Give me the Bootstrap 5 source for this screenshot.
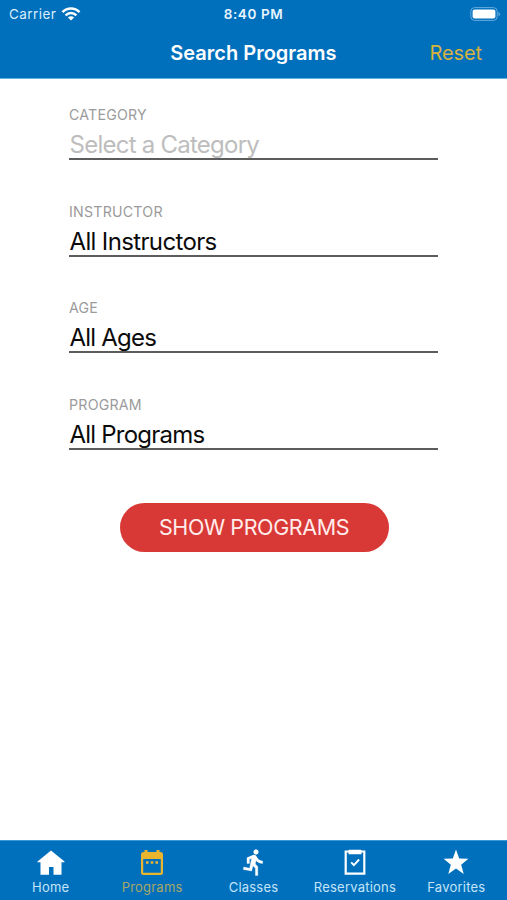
<!DOCTYPE html>
<html lang="en">
<head>
<meta charset="utf-8">
<meta name="viewport" content="width=device-width, initial-scale=1">
<title>Search Programs</title>
<link href="https://cdn.jsdelivr.net/npm/bootstrap@5.3.0/dist/css/bootstrap.min.css" rel="stylesheet">
<style>
body { font-family: Inter, "Liberation Sans", sans-serif; height: 900px; }
.bar-blue { background: #0070bd; color: #fff; }
.top-bar { height: 79px; border-bottom: 1px solid #5fb4e6; }
.status-row { height: 27px; font-size: 13.5px; line-height: 28px; }
.status-row > *, .title-row > * { width: 33.3333%; }
.carrier { letter-spacing: .42px; color: #d9eefb; padding-left: 9px; }
.carrier svg { margin-left: 5px; }
.clock { font-weight: 600; font-size: 13.5px; letter-spacing: .6px; color: #e8f5fd; }
.batt { padding-right: 6px; }
.title-row { height: 51px; line-height: 52px; font-size: 20px; }
.title-text { font-weight: 600; letter-spacing: 0; }
.reset-link { color: #d8b23c; letter-spacing: -.1px; padding-right: 25px; }
.search-form { width: 369px; margin-left: 69px; padding-top: 28px; }
.field { height: 96.5px; }
.field-label { font-size: 14.2px; line-height: 16px; color: #9b9b9b; letter-spacing: .22px; }
.field-value { height: 37px; font-size: 24px; line-height: 43px; letter-spacing: -.64px; color: #0b0b0b; border-bottom: 2px solid #5c5c5c; padding-left: .5px; white-space: nowrap; }
.field-value.short-value { letter-spacing: -.78px; }
.placeholder-value { color: #bdbdbd; letter-spacing: -.75px; }
.show-btn { width: 269px; height: 49px; margin: 10px 0 0 50.5px; background: #d93936; color: #ffeceb; font-size: 21.5px; letter-spacing: -.4px; line-height: 49px; }
.show-btn:hover { background: #c5302d; color: #fff; }
.tab-bar { height: 60px; border-top: 1px solid #3a9ad8; }
.tab { flex: 1 1 0; color: #c5e4f7; font-size: 13px; line-height: 16px; letter-spacing: .22px; padding-top: 8px; }
.tab svg { display: block; margin-bottom: 3px; color: #fff; }
.tab.current { color: #a9a765; }
.tab.current svg { color: #e9b52e; }
</style>
</head>
<body class="d-flex flex-column bg-white overflow-hidden">
<header class="top-bar bar-blue flex-shrink-0">
  <div class="status-row d-flex">
    <div class="carrier d-flex align-items-center"><span>Carrier</span>
      <svg width="20" height="16" viewBox="0 0 20 16" fill="none" stroke="#fff" stroke-width="2.5"><path d="M1.5 6.1C6.3 1.2 13.7 1.2 18.500 6.100M4.600 9.300C7.700 6.300 12.300 6.300 15.400 9.300"/><path d="M10 14.500 6.900 11.400C8.600 9.800 11.400 9.800 13.100 11.400Z" fill="#fff" stroke="none"/></svg>
    </div>
    <div class="clock text-center">8:40 PM</div>
    <div class="batt d-flex align-items-center justify-content-end">
      <svg width="31" height="14" viewBox="0 0 31 14"><rect x=".8" y=".6" width="26.400" height="12.800" rx="3.800" fill="none" stroke="#66abdc"/><rect x="2.600" y="2.400" width="22.800" height="9.200" rx="2" fill="#fff"/><path d="M28.500 4.700q3.200 2.300 0 4.600z" fill="#66abdc"/></svg>
    </div>
  </div>
  <div class="title-row d-flex text-nowrap">
    <div></div>
    <div class="title-text text-center">Search Programs</div>
    <div class="reset-link text-end">Reset</div>
  </div>
</header>
<main class="flex-grow-1">
  <div class="search-form">
    <div class="field"><div class="field-label">CATEGORY</div><div class="field-value placeholder-value">Select a Category</div></div>
    <div class="field"><div class="field-label">INSTRUCTOR</div><div class="field-value">All Instructors</div></div>
    <div class="field"><div class="field-label">AGE</div><div class="field-value short-value">All Ages</div></div>
    <div class="field"><div class="field-label">PROGRAM</div><div class="field-value short-value">All Programs</div></div>
    <button type="button" class="show-btn btn rounded-pill border-0 p-0 d-block">SHOW PROGRAMS</button>
  </div>
</main>
<nav class="tab-bar bar-blue d-flex flex-shrink-0">
  <div class="tab d-flex flex-column align-items-center">
    <svg width="28" height="27" viewBox="0 0 28 27" fill="currentColor"><path d="M14 1.500 27.500 12.500V13.200H24.500V25.700H16.500V18H12V25.700H3.500V13.200H.5V12.500Z"/></svg>
    <span>Home</span>
  </div>
  <div class="tab current d-flex flex-column align-items-center">
    <svg width="24" height="27" viewBox="0 0 24 27" fill="currentColor"><path fill-rule="evenodd" d="M3.500 3H4.500V1H7.500V3H16.500V1H19.500V3H20.500Q23 3 23 5.500V23.500Q23 26 20.500 26H3.500Q1 26 1 23.500V5.500Q1 3 3.500 3ZM3.200 10V23.800H20.800V10Z"/><path d="M6 12.200h2.600v2.600H6zM10.700 12.200h2.600v2.600h-2.600zM15.400 12.200H18v2.600h-2.600z"/></svg>
    <span>Programs</span>
  </div>
  <div class="tab d-flex flex-column align-items-center">
    <svg width="27" height="27" viewBox="0.300 1 22.200 22.500" fill="currentColor" stroke="currentColor" stroke-width=".3"><path d="M13.490 5.480c1.100 0 2-.9 2-2s-.9-2-2-2-2 .9-2 2 .9 2 2 2zm-3.600 13.900l1-4.400 2.100 2v6h2v-7.500l-2.100-2 .6-3c1.300 1.500 3.300 2.500 5.500 2.500v-2c-1.900 0-3.500-1-4.300-2.400l-1-1.600c-.4-.6-1-1-1.700-1-.3 0-.5.1-.8.1l-5.200 2.200v4.700h2v-3.400l1.800-.7-1.600 8.100-4.900-1-.4 2 7 1.400z"/></svg>
    <span>Classes</span>
  </div>
  <div class="tab d-flex flex-column align-items-center">
    <svg width="22" height="27" viewBox="0 0 22 27" fill="none" stroke="currentColor"><path d="M1.700 2.500H20.300V24.700H1.700Z" stroke-width="2.200"/><path d="M4.500 1.500Q4.500 .7 5.300 .7H16.700Q17.500 .7 17.500 1.500V5.300H4.500Z" fill="currentColor" stroke="none"/><path d="m7.200 13.300 2.700 2.900 5.200-5.700" stroke-width="1.900"/></svg>
    <span>Reservations</span>
  </div>
  <div class="tab d-flex flex-column align-items-center">
    <svg width="26" height="27" viewBox="0 0 26 27" fill="currentColor"><path d="M13 .5 16.200 9.500 25.300 9.800 18.200 15.700 20.700 25 13 19.600 5.300 25 7.800 15.700.7 9.800 9.800 9.500Z"/></svg>
    <span>Favorites</span>
  </div>
</nav>
<script src="https://cdn.jsdelivr.net/npm/bootstrap@5.3.0/dist/js/bootstrap.bundle.min.js"></script>
</body>
</html>
